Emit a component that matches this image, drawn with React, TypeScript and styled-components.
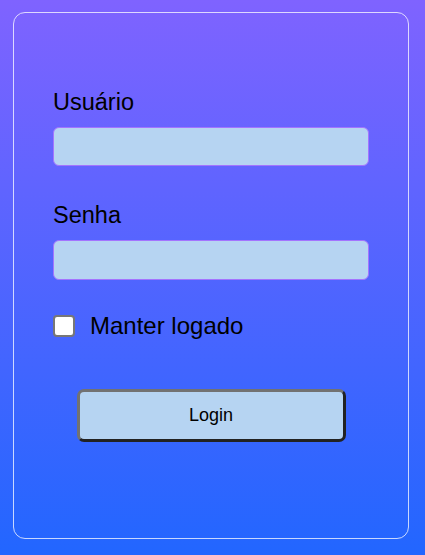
import React from "react";
import styled, { createGlobalStyle } from "styled-components";

const Global = createGlobalStyle`
  html, body { margin: 0; padding: 0; }
  body {
    font-family: "Liberation Sans", Arial, sans-serif;
    background: linear-gradient(180deg, #7f63ff 0%, #2266ff 100%);
    min-height: 555px;
  }
  * { box-sizing: border-box; }
`;

const Page = styled.div`
  width: 425px;
  height: 555px;
  padding: 12px 0 0 13px;
  background: linear-gradient(180deg, #7f63ff 0%, #2266ff 100%);
`;

const Card = styled.form`
  width: 396px;
  height: 527px;
  border: 1px solid rgba(255, 255, 255, 0.75);
  border-radius: 12px;
  padding: 76px 39px 0;
  display: flex;
  flex-direction: column;
`;

const Field = styled.div<{ $gap?: number }>`
  display: flex;
  flex-direction: column;
  margin-bottom: ${(p) => p.$gap ?? 0}px;
`;

const Label = styled.label`
  font-size: 23.5px;
  line-height: 27px;
  color: #000;
  margin-bottom: 11px;
`;

const Input = styled.input<{ $h?: number }>`
  width: 316px;
  height: ${(p) => p.$h ?? 39}px;
  border: 1px solid #a374ff;
  border-radius: 6px;
  background: #b6d4f2;
  outline: none;
  font-family: inherit;
  font-size: 16px;
  padding: 0 8px;
`;

const CheckRow = styled.label`
  display: flex;
  align-items: center;
  gap: 15px;
  height: 27px;
  font-size: 24px;
  color: #000;
`;

const Box = styled.span`
  width: 22px;
  height: 22px;
  border: 2px solid #777;
  border-radius: 4px;
  background: #fff;
  flex: none;
`;

const Button = styled.button`
  align-self: center;
  width: 269px;
  height: 53px;
  margin-top: 50px;
  background: #b6d4f2;
  border: 3px solid;
  border-color: #727272 #222 #222 #727272;
  border-radius: 7px;
  font-family: "Liberation Sans", Arial, sans-serif;
  font-size: 18px;
  color: #000;
  cursor: pointer;
`;

export default function App() {
  return (
    <>
      <Global />
      <Page>
        <Card onSubmit={(e) => e.preventDefault()}>
          <Field $gap={36}>
            <Label htmlFor="user">Usuário</Label>
            <Input id="user" type="text" />
          </Field>
          <Field $gap={32}>
            <Label htmlFor="pass">Senha</Label>
            <Input id="pass" type="password" $h={40} />
          </Field>
          <CheckRow>
            <Box />
            Manter logado
          </CheckRow>
          <Button type="submit">Login</Button>
        </Card>
      </Page>
    </>
  );
}
